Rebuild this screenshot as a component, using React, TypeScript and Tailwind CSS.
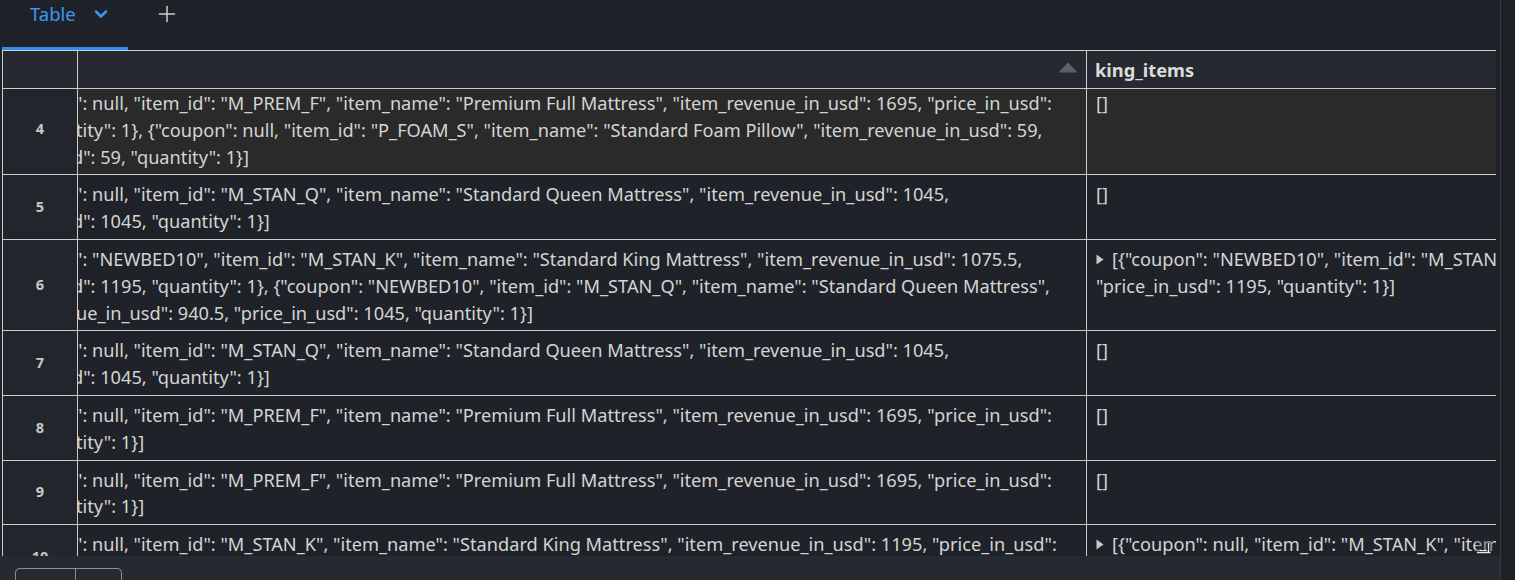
import React from "react";
import { ChevronDown, Plus } from "lucide-react";

type Line = { t: string; o: number };
type King = { l1: string; l2?: string } | null;
type Row = { idx: number; lines: Line[]; king: King; hover?: boolean };

const L1_PREM = '": null, "item_id": "M_PREM_F", "item_name": "Premium Full Mattress", "item_revenue_in_usd": 1695, "price_in_usd":';
const L1_STANQ = '": null, "item_id": "M_STAN_Q", "item_name": "Standard Queen Mattress", "item_revenue_in_usd": 1045,';

const rows: Row[] = [
  {
    idx: 4,
    hover: true,
    lines: [
      { t: L1_PREM, o: -3 },
      { t: 'tity": 1}, {"coupon": null, "item_id": "P_FOAM_S", "item_name": "Standard Foam Pillow", "item_revenue_in_usd": 59,', o: -2 },
      { t: 'd": 59, "quantity": 1}]', o: -6 },
    ],
    king: { l1: "[]" },
  },
  {
    idx: 5,
    lines: [
      { t: L1_STANQ, o: -3 },
      { t: 'd": 1045, "quantity": 1}]', o: -6 },
    ],
    king: { l1: "[]" },
  },
  {
    idx: 6,
    lines: [
      { t: '": "NEWBED10", "item_id": "M_STAN_K", "item_name": "Standard King Mattress", "item_revenue_in_usd": 1075.5,', o: -3 },
      { t: 'd": 1195, "quantity": 1}, {"coupon": "NEWBED10", "item_id": "M_STAN_Q", "item_name": "Standard Queen Mattress",', o: -6 },
      { t: 'ue_in_usd": 940.5, "price_in_usd": 1045, "quantity": 1}]', o: -2 },
    ],
    king: {
      l1: '[{"coupon": "NEWBED10", "item_id": "M_STAN_K", "item_name": "Standard King Mattress",',
      l2: '"price_in_usd": 1195, "quantity": 1}]',
    },
  },
  {
    idx: 7,
    lines: [
      { t: L1_STANQ, o: -3 },
      { t: 'd": 1045, "quantity": 1}]', o: -6 },
    ],
    king: { l1: "[]" },
  },
  {
    idx: 8,
    lines: [
      { t: L1_PREM, o: -3 },
      { t: 'tity": 1}]', o: -2 },
    ],
    king: { l1: "[]" },
  },
  {
    idx: 9,
    lines: [
      { t: L1_PREM, o: -3 },
      { t: 'tity": 1}]', o: -2 },
    ],
    king: { l1: "[]" },
  },
  {
    idx: 10,
    lines: [
      { t: '": null, "item_id": "M_STAN_K", "item_name": "Standard King Mattress", "item_revenue_in_usd": 1195, "price_in_usd":', o: -3 },
      { t: 'd": 1195, "quantity": 1}]', o: -6 },
    ],
    king: {
      l1: '[{"coupon": null, "item_id": "M_STAN_K", "item_name": "Standard King Mattress",',
      l2: '"price_in_usd": 1195, "quantity": 1}]',
    },
  },
];

function Tri() {
  return (
    <svg width="8" height="11" viewBox="0 0 8 11" className="shrink-0 mt-[8px] mr-[8px]">
      <path d="M0.5 0.5 L7.5 5.5 L0.5 10.5 Z" fill="#c9c9c9" />
    </svg>
  );
}

function KingCell({ king, last }: { king: King; last?: boolean }) {
  if (!king) return <div />;
  const expandable = king.l1 !== "[]";
  return (
    <div className="relative overflow-hidden pl-[9px] pt-[6px] pb-[4px] leading-[26.8px] whitespace-nowrap">
      {expandable ? (
        <>
          <div className="flex items-start">
            <Tri />
            <span>{king.l1}</span>
          </div>
          {king.l2 && <div>{king.l2}</div>}
        </>
      ) : (
        <div>{king.l1}</div>
      )}
      {last && (
        <svg
          width="16"
          height="16"
          viewBox="0 0 16 16"
          className="absolute left-[389px] top-[14px]"
        >
          <rect x="0" y="0" width="16" height="16" fill="#1f2329" opacity="0.35" />
          <path d="M1 13.5 H14.5 M12.5 4 V13.5" stroke="#e6e6e6" strokeWidth="1.3" fill="none" />
          <path d="M4 11.5 H11" stroke="#e6e6e6" strokeWidth="1" fill="none" />
        </svg>
      )}
    </div>
  );
}

export default function App() {
  return (
    <div className="w-[1515px] h-[580px] flex bg-[#1f2329] overflow-hidden text-[#d4d4d4] font-['Noto_Sans',sans-serif]">
      <div className="w-[1500px] flex flex-col">
        {/* Tab bar */}
        <div className="h-[50px] shrink-0 flex items-start pl-[2px]">
          <div className="w-[126px] h-[50px] border-b-[3px] border-[#2f8ff0] flex items-start">
            <span className="ml-[28px] mt-[1px] text-[18.5px] leading-[26px] text-[#3a99f2]">Table</span>
            <ChevronDown size={20} strokeWidth={3} color="#3a99f2" className="ml-[15px] mt-[4px]" />
          </div>
          <Plus size={26} strokeWidth={1.4} color="#cfcfcf" className="ml-[26px] mt-[1px]" />
        </div>

        {/* Table */}
        <div className="flex-1 min-h-0 flex flex-col pl-[2px] pr-[4px]">
          <div className="flex-1 min-h-0 flex flex-col border-l border-t border-[#cccccc] overflow-hidden">
            {/* Header */}
            <div className="grid grid-cols-[75px_1009px_1fr] h-[38px] shrink-0 border-b border-[#cccccc] bg-[#262a30]">
              <div className="border-r border-[#cccccc]" />
              <div className="border-r border-[#cccccc] flex items-center justify-end pr-[8px]">
                <svg width="20" height="11" viewBox="0 0 20 11" className="mb-[4px]">
                  <path d="M10 0.5 L19.5 10.5 L0.5 10.5 Z" fill="#5d6269" />
                </svg>
              </div>
              <div className="flex items-center pl-[8px] text-[18.3px] font-bold text-[#dcdcdc]">king_items</div>
            </div>
            {/* Body */}
            <div className="flex-1 min-h-0 overflow-hidden">
              <div className="mt-[-5px]">
                {rows.map((r, i) => (
                  <div
                    key={r.idx}
                    className={
                      "grid grid-cols-[75px_1009px_1fr] border-b border-[#cccccc] text-[18.2px] " +
                      (r.hover ? "bg-[#2a2a2a]" : "bg-[#1f2329]")
                    }
                  >
                    <div className="border-r border-[#cccccc] bg-[#22262c] flex items-center justify-center text-[14.5px] font-bold text-[#c8c8c8]">
                      {r.idx}
                    </div>
                    <div className="border-r border-[#cccccc] overflow-hidden pt-[6px] pb-[4px] leading-[26.8px] whitespace-nowrap">
                      {r.lines.map((l, j) => (
                        <div key={j} style={{ marginLeft: l.o }}>
                          {l.t}
                        </div>
                      ))}
                    </div>
                    <KingCell king={r.king} last={i === rows.length - 1} />
                  </div>
                ))}
              </div>
            </div>
          </div>
        </div>

        {/* Bottom bar */}
        <div className="h-[24px] shrink-0 bg-[#252a30] pt-[12px] pl-[15px]">
          <div className="flex w-[107px] h-[20px] border border-b-0 border-[#8a8e94] rounded-t-[5px]">
            <div className="w-[60px] border-r border-[#8a8e94]" />
            <div className="flex-1" />
          </div>
        </div>
      </div>
      <div className="w-[15px] border-l border-[#343940] bg-[#1e2227]" />
    </div>
  );
}
